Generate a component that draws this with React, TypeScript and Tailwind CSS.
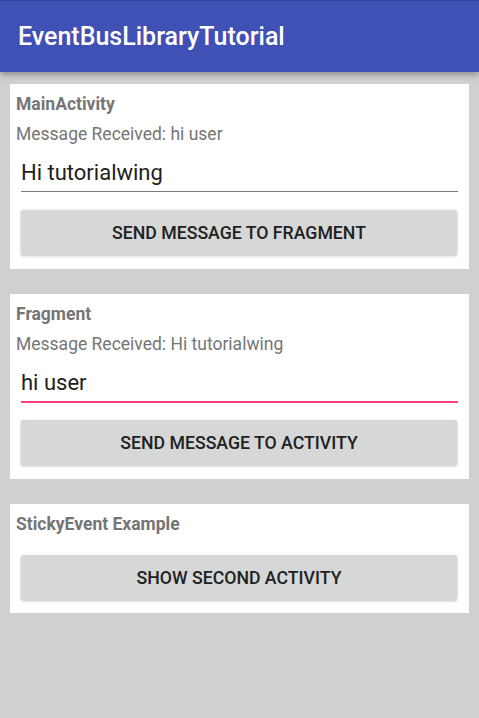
const font = { fontFamily: 'Roboto, "Noto Sans", sans-serif' };

function TextField({ value, focused }: { value: string; focused?: boolean }) {
  return (
    <div
      className={`mx-[11px] mt-[17px] pb-[6px] ${
        focused ? 'border-b-2 border-[#ff4081]' : 'border-b border-[#7a7a7a]'
      }`}
    >
      <div className="text-[22px] leading-[24px] text-[#212121]">{value}</div>
    </div>
  );
}

function Button({ label, className = '' }: { label: string; className?: string }) {
  return (
    <button
      className={`mx-[11px] flex h-[45px] w-[436px] items-center justify-center rounded-[2px] bg-[#d6d7d7] pt-[1px] text-[17.7px] font-medium text-[#212121] shadow-[0_1px_3px_rgba(0,0,0,0.25)] ${className}`}
    >
      {label}
    </button>
  );
}

function Card({ children, className = '' }: { children: React.ReactNode; className?: string }) {
  return <div className={`flex flex-col bg-white pt-[10px] ${className}`}>{children}</div>;
}

export default function App() {
  return (
    <div className="flex min-h-[718px] w-[479px] flex-col bg-[#d0d0d0]" style={font}>
      {/* Toolbar */}
      <div className="relative z-10 flex h-[72px] items-center border-t border-[#34449a] bg-[#3f51b5] pl-[18px] shadow-[0_3px_6px_rgba(0,0,0,0.3)]">
        <span className="text-[25px] font-medium leading-[30px] text-white">EventBusLibraryTutorial</span>
      </div>

      <div className="flex flex-col gap-[25px] px-[10px] pt-[12px]">
        {/* MainActivity */}
        <Card className="pb-[14px]">
          <div className="px-[6px] text-[17.5px] font-bold leading-[20px] text-[#757575]">MainActivity</div>
          <div className="mt-[10px] px-[6px] text-[17.5px] leading-[20px] text-[#757575]">Message Received: hi user</div>
          <TextField value="Hi tutorialwing" />
          <Button label="SEND MESSAGE TO FRAGMENT" className="mt-[18px]" />
        </Card>

        {/* Fragment */}
        <Card className="pb-[14px]">
          <div className="px-[6px] text-[17.5px] font-bold leading-[20px] text-[#757575]">Fragment</div>
          <div className="mt-[10px] px-[6px] text-[17.5px] leading-[20px] text-[#757575]">Message Received: Hi tutorialwing</div>
          <TextField value="hi user" focused />
          <Button label="SEND MESSAGE TO ACTIVITY" className="mt-[17px]" />
        </Card>

        {/* Sticky */}
        <Card className="pb-[13px]">
          <div className="px-[6px] text-[17.5px] font-bold leading-[20px] text-[#757575]">StickyEvent Example</div>
          <Button label="SHOW SECOND ACTIVITY" className="mt-[21px]" />
        </Card>
      </div>
    </div>
  );
}
